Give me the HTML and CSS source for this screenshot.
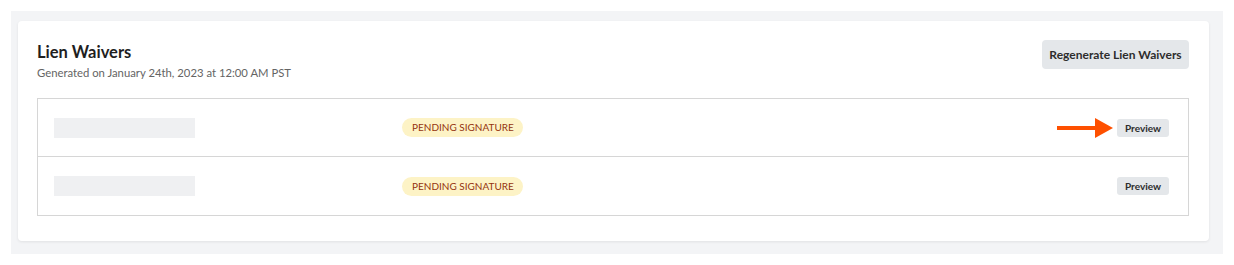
FILE: index.html
```html
<!DOCTYPE html>
<html lang="en">
<head>
<meta charset="utf-8">
<title>Lien Waivers</title>
<link rel="stylesheet" href="styles.css">
</head>
<body>
<div class="panel">
  <section class="card">
    <header class="card-header">
      <div class="heading">
        <h2 class="title">Lien Waivers</h2>
        <p class="subtitle">Generated on January 24th, 2023 at 12:00 AM PST</p>
      </div>
      <button class="btn btn-lg" type="button">Regenerate Lien Waivers</button>
    </header>
    <div class="table">
      <div class="row">
        <div class="cell-name"><span class="placeholder"></span></div>
        <span class="badge">PENDING SIGNATURE</span>
        <div class="actions">
          <svg class="arrow" width="56" height="20" viewBox="0 0 56 20" aria-hidden="true">
            <rect x="0" y="8" width="40" height="4" fill="#fe5000"/>
            <polygon points="38,0 56,10 38,20" fill="#fe5000"/>
          </svg>
          <button class="btn btn-sm" type="button">Preview</button>
        </div>
      </div>
      <div class="row">
        <div class="cell-name"><span class="placeholder"></span></div>
        <span class="badge">PENDING SIGNATURE</span>
        <div class="actions">
          <button class="btn btn-sm" type="button">Preview</button>
        </div>
      </div>
    </div>
  </section>
</div>
</body>
</html>
```

FILE: styles.css
```css
* { box-sizing: border-box; }
html, body { margin: 0; padding: 0; background: #ffffff; }
body {
  font-family: Lato, "Open Sans", Arial, sans-serif;
  color: #222222;
  padding: 11px 11px 11px 11px;
}
.panel {
  width: 1212px;
  height: 243px;
  background: #f3f4f6;
  padding: 10px 14px 13px 7px;
}
.card {
  background: #ffffff;
  border-radius: 4px;
  box-shadow: 0 1px 3px rgba(0, 0, 0, 0.08);
  padding: 19px 20px 26px 19px;
  height: 220px;
}
.card-header {
  display: flex;
  justify-content: space-between;
  align-items: flex-start;
}
.heading { padding-top: 2px; }
.title {
  margin: 0;
  font-size: 16.5px;
  line-height: 20px;
  font-weight: 700;
  color: #1f1f1f;
}
.subtitle {
  margin: 3px 0 0 0;
  font-size: 11.3px;
  line-height: 16px;
  color: #646464;
}
.btn {
  font-family: Lato, "Open Sans", Arial, sans-serif;
  border: none;
  background: #e4e7ea;
  color: #2d2d2d;
  font-weight: 700;
  cursor: pointer;
  padding: 0;
}
.btn-lg {
  width: 147px;
  height: 29px;
  font-size: 12px;
  border-radius: 4px;
}
.table {
  margin-top: 17px;
  border: 1px solid #d6d6d6;
}
.row {
  display: flex;
  align-items: center;
  height: 57px;
  padding: 0 19px 0 16px;
}
.row + .row { border-top: 1px solid #d6d6d6; height: 59px; }
.cell-name { width: 348px; display: flex; }
.placeholder {
  display: block;
  width: 141px;
  height: 20px;
  background: #eff0f2;
}
.badge {
  display: inline-block;
  height: 19px;
  line-height: 19px;
  padding: 0 10px;
  width: 121px;
  text-align: center;
  border-radius: 10px;
  background: #fdf3c6;
  color: #95330f;
  font-size: 10px;
  white-space: nowrap;
}
.actions {
  margin-left: auto;
  position: relative;
  display: flex;
  align-items: center;
}
.arrow {
  position: absolute;
  right: calc(100% + 4px);
  top: 50%;
  transform: translateY(-50%);
}
.btn-sm {
  width: 52px;
  height: 18px;
  font-size: 10px;
  border-radius: 3px;
}
```
